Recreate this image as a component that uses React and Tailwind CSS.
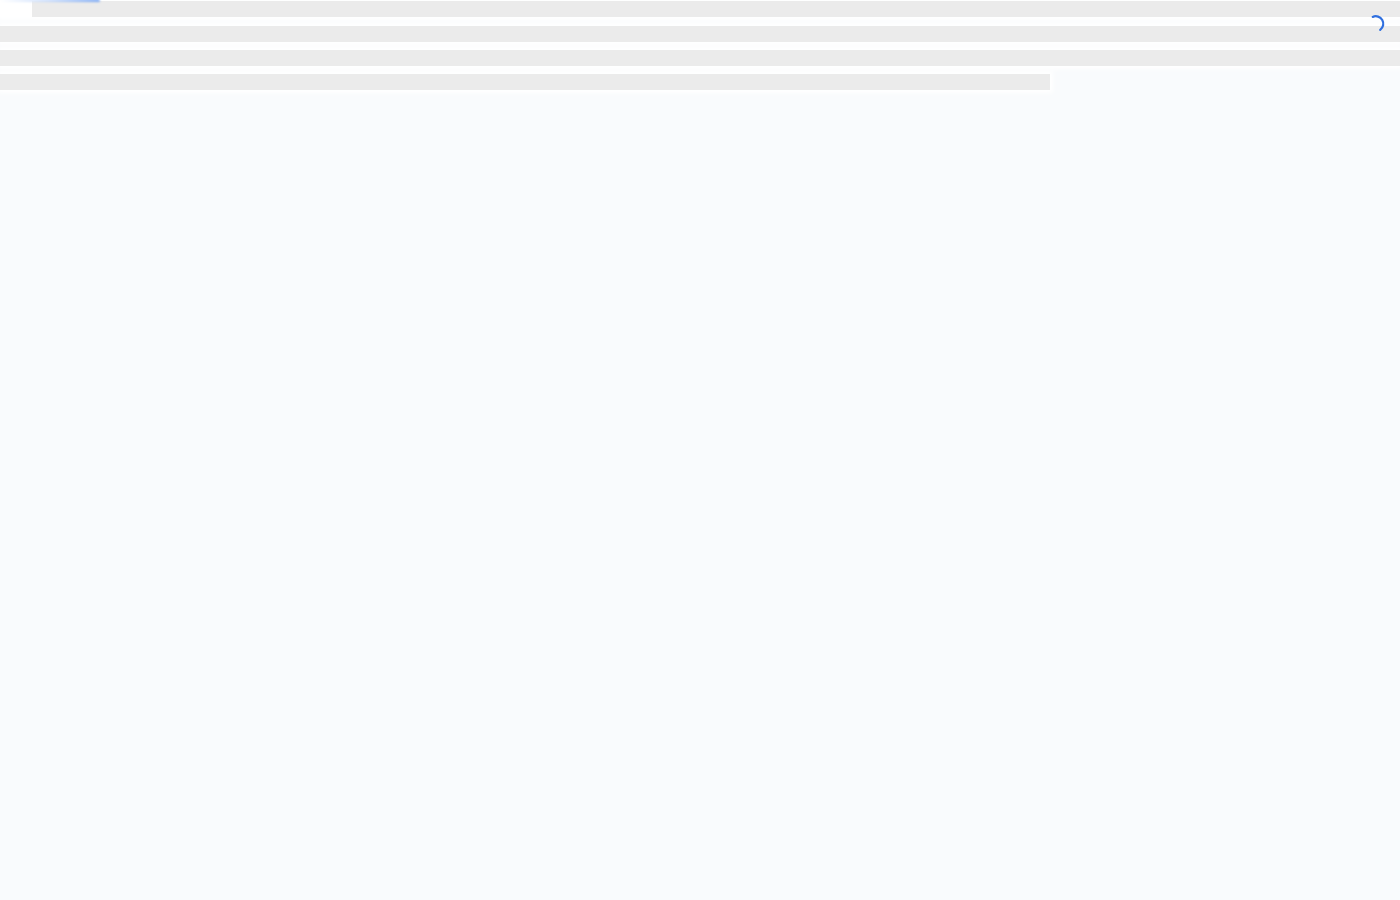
export default function App() {
  const lines = ["w-full", "w-full", "w-3/4"];

  return (
    <div className="relative min-h-screen bg-[#f9fbfd] overflow-hidden">
      {/* Loading skeleton */}
      <div className="pt-px blur-[0.6px]">
        <div className="bg-white pl-8 shadow-[0_0_5px_3px_#ffffff]">
          <div className="h-4 bg-[#ebebeb]"></div>
        </div>
        <div className="mt-[9px] flex flex-col gap-2">
          {lines.map((width, i) => (
            <div key={i} className={`h-4 bg-[#ebebeb] shadow-[0_0_5px_3px_#ffffff] ${width}`}></div>
          ))}
        </div>
      </div>

      {/* Top progress bar */}
      <div className="absolute -top-px left-0 h-[3px] w-[100px] rounded-r-full bg-gradient-to-r from-white via-[#c9dcfb] to-[#7fabf3] blur-[1px]"></div>

      {/* Spinner */}
      <svg
        className="absolute top-[14px] left-[1368px] blur-[0.4px]"
        width="18"
        height="18"
        viewBox="0 0 18 18"
        fill="none"
      >
        <path
          d="M4.7 2.9A7.5 7.5 0 0 1 12.2 15.8"
          stroke="#2f6fdf"
          strokeWidth="2.2"
          strokeLinecap="round"
        />
      </svg>
    </div>
  );
}
